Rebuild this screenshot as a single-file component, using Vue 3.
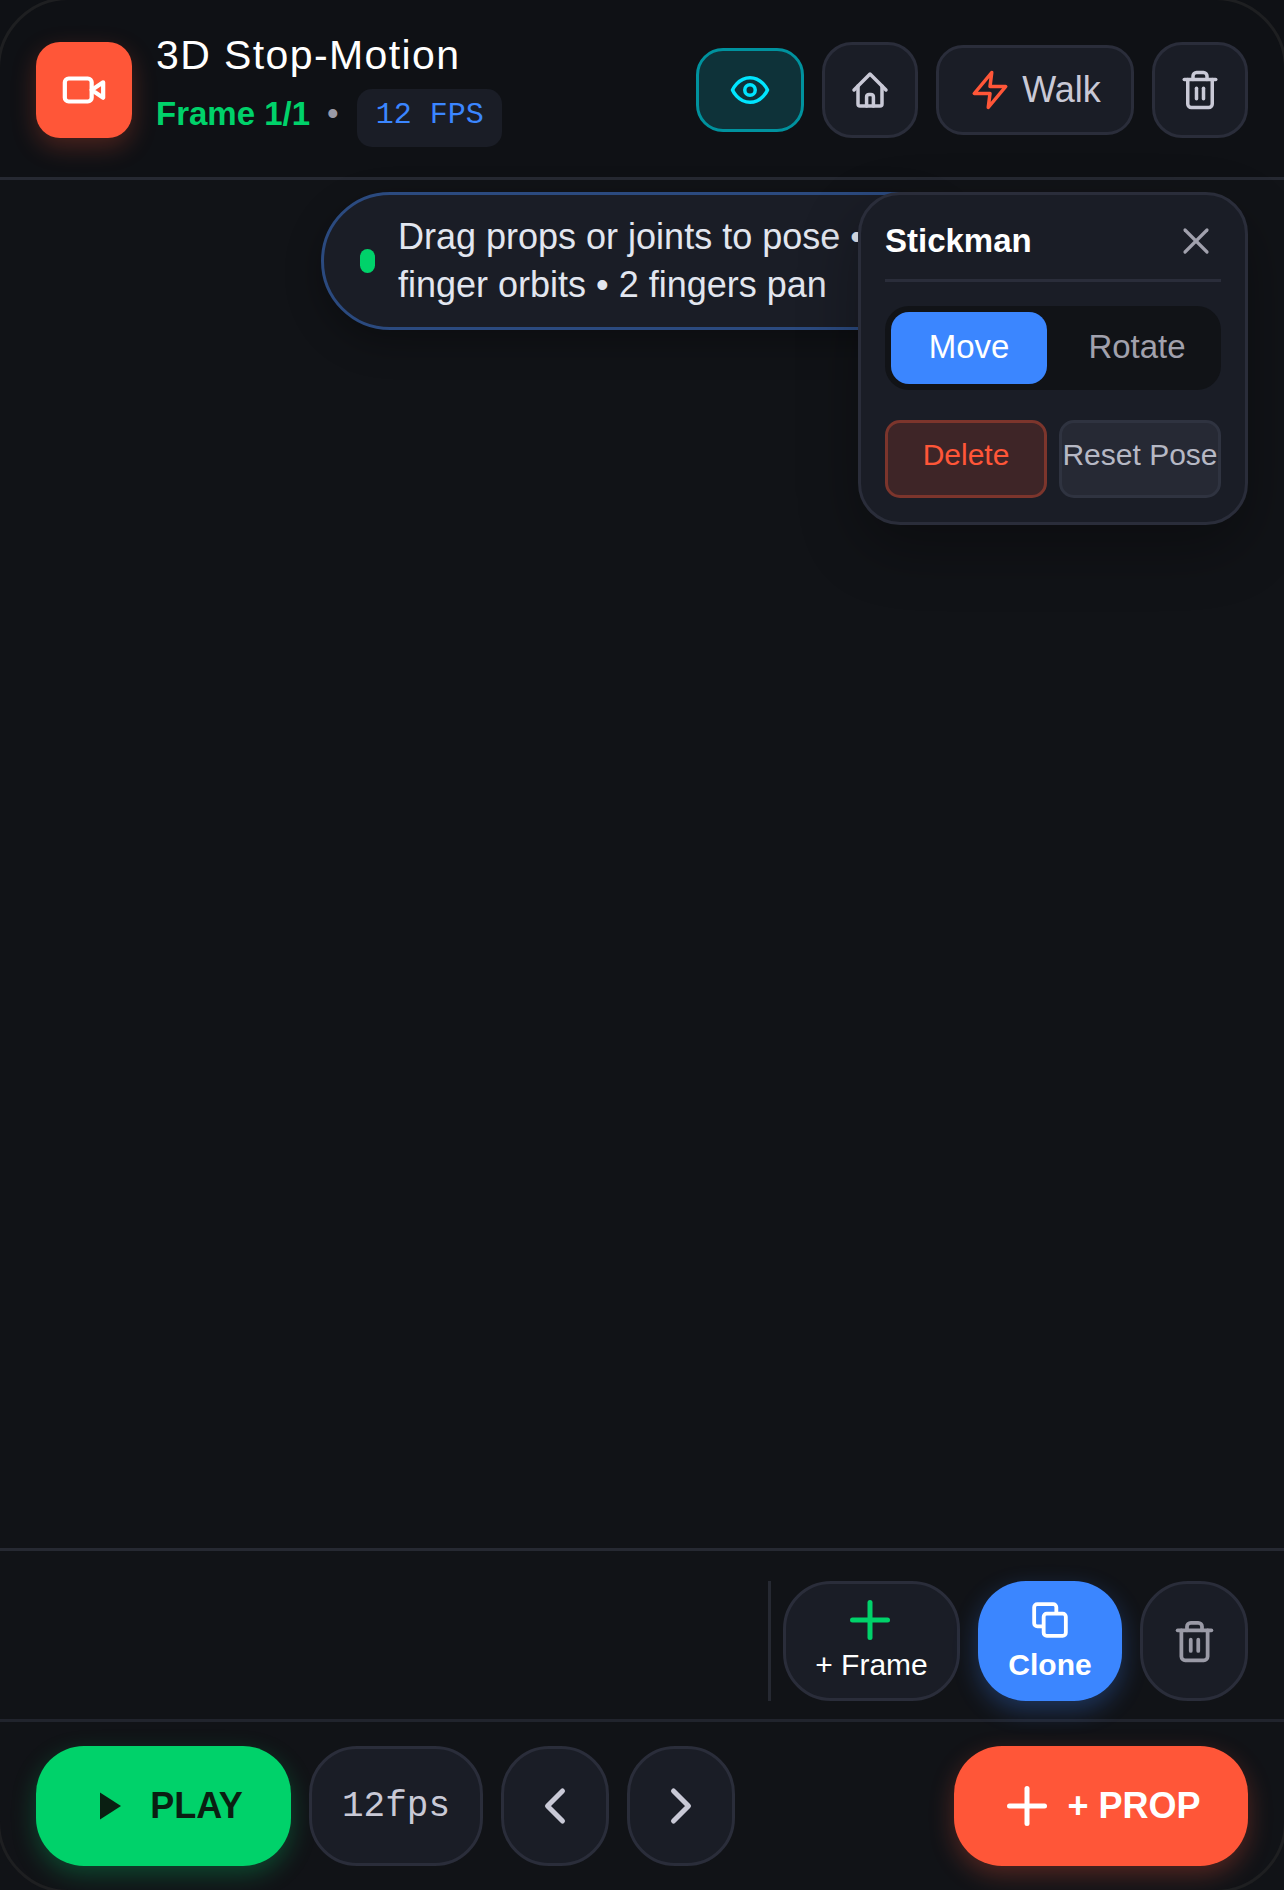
<script setup>
import { ref } from 'vue'

const mode = ref('Move')
const fps = ref(12)
const frame = ref(1)
const total = ref(1)
</script>

<template>
  <div class="app">
    <header class="topbar">
      <div class="logo">
        <svg width="46" height="46" viewBox="0 0 24 24" fill="none" stroke="#fff" stroke-width="2.2" stroke-linecap="round" stroke-linejoin="round">
          <path d="m22 8-6 4 6 4V8Z" />
          <rect x="2" y="6" width="14" height="12" rx="2" />
        </svg>
      </div>
      <div class="title-block">
        <h1>3D Stop-Motion</h1>
        <div class="meta">
          <span class="frame-count">Frame {{ frame }}/{{ total }}</span>
          <span class="sep">•</span>
          <span class="fps-badge">{{ fps }} FPS</span>
        </div>
      </div>
      <div class="top-actions">
        <button class="btn eye">
          <svg width="42" height="42" viewBox="0 0 24 24" fill="none" stroke="#00e5ff" stroke-width="2" stroke-linecap="round" stroke-linejoin="round">
            <path d="M2 12s3-7 10-7 10 7 10 7-3 7-10 7-10-7-10-7Z" />
            <circle cx="12" cy="12" r="3" />
          </svg>
        </button>
        <button class="btn square">
          <svg width="48" height="48" viewBox="0 0 24 24" fill="none" stroke="#c9c9d6" stroke-width="1.75" stroke-linecap="round" stroke-linejoin="round">
            <path d="M4 12 12 4l8 8" />
            <path d="M6 10v9a1 1 0 0 0 1 1h10a1 1 0 0 0 1-1v-9" />
            <path d="M10.3 20v-4.6a1.2 1.2 0 0 1 1.2-1.2h1a1.2 1.2 0 0 1 1.2 1.2V20" />
          </svg>
        </button>
        <button class="btn walk">
          <svg width="42" height="42" viewBox="0 0 24 24" fill="none" stroke="#ff5638" stroke-width="2" stroke-linecap="round" stroke-linejoin="round">
            <polygon points="13 2 3 14 12 14 11 22 21 10 12 10 13 2" />
          </svg>
          Walk
        </button>
        <button class="btn square">
          <svg width="42" height="42" viewBox="0 0 24 24" fill="none" stroke="#c9c9d6" stroke-width="2" stroke-linecap="round" stroke-linejoin="round">
            <path d="M3 6h18" />
            <path d="M19 6v14c0 1-1 2-2 2H7c-1 0-2-1-2-2V6" />
            <path d="M8 6V4c0-1 1-2 2-2h4c1 0 2 1 2 2v2" />
            <line x1="10" x2="10" y1="11" y2="17" />
            <line x1="14" x2="14" y1="11" y2="17" />
          </svg>
        </button>
      </div>
    </header>

    <main class="stage">
      <div class="hint">
        <span class="hint-dot"></span>
        <span class="hint-text">Drag props or joints to pose • 1 finger orbits • 2 fingers pan</span>
      </div>

      <aside class="panel">
        <div class="panel-head">
          <span class="panel-title">Stickman</span>
          <svg class="close" width="44" height="44" viewBox="0 0 24 24" fill="none" stroke="#a1a1ad" stroke-width="1.75" stroke-linecap="round" stroke-linejoin="round">
            <path d="M18 6 6 18" />
            <path d="m6 6 12 12" />
          </svg>
        </div>
        <div class="segment">
          <button :class="['seg', { on: mode === 'Move' }]">Move</button>
          <button :class="['seg', { on: mode === 'Rotate' }]">Rotate</button>
        </div>
        <div class="panel-actions">
          <button class="act danger">Delete</button>
          <button class="act">Reset Pose</button>
        </div>
      </aside>
    </main>

    <section class="framebar">
      <span class="divider"></span>
      <button class="btn tall add-frame">
        <svg width="60" height="60" viewBox="0 0 24 24" fill="none" stroke="#00d26a" stroke-width="2" stroke-linecap="round" stroke-linejoin="round">
          <path d="M5 12h14" />
          <path d="M12 5v14" />
        </svg>
        + Frame
      </button>
      <button class="btn tall clone">
        <svg width="38" height="38" viewBox="0 0 24 24" fill="none" stroke="#fff" stroke-width="2.4" stroke-linecap="round" stroke-linejoin="round">
          <rect x="2" y="2" width="14" height="14" rx="2" ry="2" />
          <rect x="8" y="8" width="14" height="14" rx="2" ry="2" fill="#3b86ff" />
        </svg>
        Clone
      </button>
      <button class="btn tall remove">
        <svg width="45" height="45" viewBox="0 0 24 24" fill="none" stroke="#9a9aa6" stroke-width="2" stroke-linecap="round" stroke-linejoin="round">
          <path d="M3 6h18" />
          <path d="M19 6v14c0 1-1 2-2 2H7c-1 0-2-1-2-2V6" />
          <path d="M8 6V4c0-1 1-2 2-2h4c1 0 2 1 2 2v2" />
          <line x1="10" x2="10" y1="11" y2="17" />
          <line x1="14" x2="14" y1="11" y2="17" />
        </svg>
      </button>
    </section>

    <footer class="bottombar">
      <button class="btn big play">
        <svg width="36" height="36" viewBox="0 0 24 24" fill="#0a1f12">
          <polygon points="6 3 20 12 6 21 6 3" />
        </svg>
        PLAY
      </button>
      <button class="btn big speed">{{ fps }}fps</button>
      <button class="btn big nav">
        <svg width="60" height="60" viewBox="0 0 24 24" fill="none" stroke="#c9c9d6" stroke-width="2" stroke-linecap="round" stroke-linejoin="round">
          <path d="m15 18-6-6 6-6" />
        </svg>
      </button>
      <button class="btn big nav">
        <svg width="60" height="60" viewBox="0 0 24 24" fill="none" stroke="#c9c9d6" stroke-width="2" stroke-linecap="round" stroke-linejoin="round">
          <path d="m9 18 6-6-6-6" />
        </svg>
      </button>
      <button class="btn big prop">
        <svg width="60" height="60" viewBox="0 0 24 24" fill="none" stroke="#fff" stroke-width="2" stroke-linecap="round" stroke-linejoin="round">
          <path d="M5 12h14" />
          <path d="M12 5v14" />
        </svg>
        + PROP
      </button>
    </footer>
  </div>
</template>

<style scoped>
.app {
  position: relative;
  width: 1284px;
  height: 1890px;
  display: flex;
  flex-direction: column;
  overflow: hidden;
  box-sizing: border-box;
  background: #111317;
  font-family: "Liberation Sans", Arial, sans-serif;
  color: #fff;
}

/* faint device outline, only its corners land inside the page */
.app::after {
  content: "";
  position: absolute;
  inset: -3px;
  border: 3px solid #1e1f21;
  border-radius: 72px;
  pointer-events: none;
}

button {
  font-family: inherit;
  cursor: pointer;
  box-sizing: border-box;
}

.topbar {
  height: 180px;
  flex-shrink: 0;
  box-sizing: border-box;
  display: flex;
  align-items: center;
  padding: 3px 36px 0;
  gap: 24px;
  background: #0f1115;
  border-bottom: 3px solid #262932;
}

.logo {
  width: 96px;
  height: 96px;
  flex-shrink: 0;
  display: flex;
  align-items: center;
  justify-content: center;
  border-radius: 24px;
  background: #ff5638;
  box-shadow: 0 9px 24px rgba(255, 86, 56, 0.25);
}

.title-block {
  display: flex;
  flex-direction: column;
  gap: 10px;
  margin-top: -2px;
}

h1 {
  margin: 0;
  font-size: 41px;
  font-weight: 400;
  line-height: 48px;
  letter-spacing: 1.4px;
  color: #fff;
}

.meta {
  display: flex;
  align-items: flex-start;
  gap: 18px;
  font-size: 33px;
  line-height: 50px;
}

.frame-count {
  font-weight: 700;
  color: #00d26a;
  margin-right: -1px;
}

.sep {
  color: #9a9aa6;
}

.fps-badge {
  height: 58px;
  box-sizing: border-box;
  padding: 8px 18px 0 19px;
  border-radius: 15px;
  background: #1a1d26;
  font-family: "Liberation Mono", monospace;
  font-size: 30px;
  line-height: 36px;
  color: #3b86ff;
}

.top-actions {
  margin-left: auto;
  display: flex;
  align-items: center;
  gap: 18px;
}

.btn {
  display: flex;
  align-items: center;
  justify-content: center;
  padding: 0;
  border: 3px solid #2a2d3a;
  background: #1a1d26;
  color: #c9c9d6;
}

.square {
  width: 96px;
  height: 96px;
  border-radius: 30px;
}

.eye {
  width: 108px;
  height: 84px;
  border-radius: 27px;
  background: #0e3239;
  border-color: #00929e;
}

.walk {
  width: 198px;
  height: 90px;
  gap: 11px;
  border-radius: 27px;
  font-size: 36px;
}

.stage {
  flex: 1;
  position: relative;
}

.hint {
  position: absolute;
  top: 12px;
  left: 321px;
  width: 642px;
  height: 138px;
  box-sizing: border-box;
  display: flex;
  align-items: center;
  gap: 23px;
  padding: 0 36px;
  border: 3px solid #2b4a7f;
  border-radius: 69px;
  background: #1a1d26;
  box-shadow: 0 12px 36px rgba(0, 0, 0, 0.3);
}

.hint-dot {
  width: 15px;
  height: 24px;
  flex-shrink: 0;
  border-radius: 8px;
  background: #00d26a;
}

.hint-text {
  font-size: 36px;
  line-height: 48px;
  color: #e2e6ef;
}

.panel {
  position: absolute;
  top: 12px;
  right: 36px;
  width: 390px;
  height: 333px;
  box-sizing: border-box;
  padding: 0 24px;
  border: 3px solid #2a2d3a;
  border-radius: 42px;
  background: #1a1d26;
  box-shadow: 0 24px 60px rgba(0, 0, 0, 0.3);
}

.panel-head {
  height: 87px;
  box-sizing: border-box;
  padding-top: 8px;
  display: flex;
  align-items: center;
  justify-content: space-between;
  border-bottom: 3px solid #2a2d3a;
}

.panel-title {
  font-size: 33px;
  font-weight: 700;
}

.close {
  margin-right: 3px;
}

.segment {
  margin-top: 24px;
  height: 84px;
  box-sizing: border-box;
  padding: 6px;
  display: grid;
  grid-template-columns: 1fr 1fr;
  gap: 12px;
  border-radius: 24px;
  background: #111317;
}

.seg {
  height: 72px;
  padding: 0 0 2px;
  border: 0;
  border-radius: 18px;
  background: transparent;
  font-size: 33px;
  color: #a1a1ad;
}

.seg.on {
  background: #3b86ff;
  color: #fff;
}

.panel-actions {
  margin-top: 30px;
  display: grid;
  grid-template-columns: 1fr 1fr;
  gap: 12px;
}

.act {
  height: 78px;
  padding: 0 0 9px;
  border: 3px solid #2f3340;
  border-radius: 15px;
  background: #262934;
  font-size: 30px;
  color: #b6b8c4;
}

.act.danger {
  background: #3e2527;
  border-color: #7c352c;
  color: #ff5638;
}

.framebar {
  height: 174px;
  flex-shrink: 0;
  box-sizing: border-box;
  display: flex;
  align-items: flex-start;
  justify-content: flex-end;
  padding: 30px 36px 0;
  border-top: 3px solid #262932;
  border-bottom: 3px solid #21242d;
}

.divider {
  width: 3px;
  height: 120px;
  margin-right: 12px;
  background: #262932;
}

.tall {
  height: 120px;
  flex-direction: column;
  border-radius: 48px;
  font-size: 30px;
  line-height: 34px;
}

.add-frame {
  width: 177px;
  padding-bottom: 4px;
  color: #fff;
  margin-right: 18px;
}

.add-frame svg {
  margin: -6px 3px -2px 0;
}

.clone {
  width: 144px;
  gap: 9px;
  margin-right: 18px;
  border: 0;
  background: #3b86ff;
  color: #fff;
  font-weight: 700;
  box-shadow: 0 9px 24px rgba(59, 134, 255, 0.3);
}

.remove {
  width: 108px;
}

.bottombar {
  height: 168px;
  flex-shrink: 0;
  box-sizing: border-box;
  display: flex;
  align-items: flex-start;
  gap: 18px;
  padding: 24px 36px;
}

.big {
  height: 120px;
  border-radius: 48px;
  font-size: 36px;
}

.play {
  width: 255px;
  gap: 23px;
  padding-left: 7px;
  border: 0;
  background: #00d26a;
  color: #0a1f12;
  font-weight: 700;
  box-shadow: 0 9px 24px rgba(0, 210, 106, 0.28);
}

.speed {
  width: 174px;
  font-family: "Liberation Mono", monospace;
  color: #c9c9d6;
}

.nav {
  width: 108px;
}

.prop {
  width: 294px;
  margin-left: auto;
  gap: 10px;
  padding-right: 4px;
  border: 0;
  background: #ff5638;
  color: #fff;
  font-weight: 700;
  box-shadow: 0 9px 24px rgba(255, 86, 56, 0.28);
}
</style>

<style>
html,
body {
  margin: 0;
  background: #0f1115;
}
</style>
